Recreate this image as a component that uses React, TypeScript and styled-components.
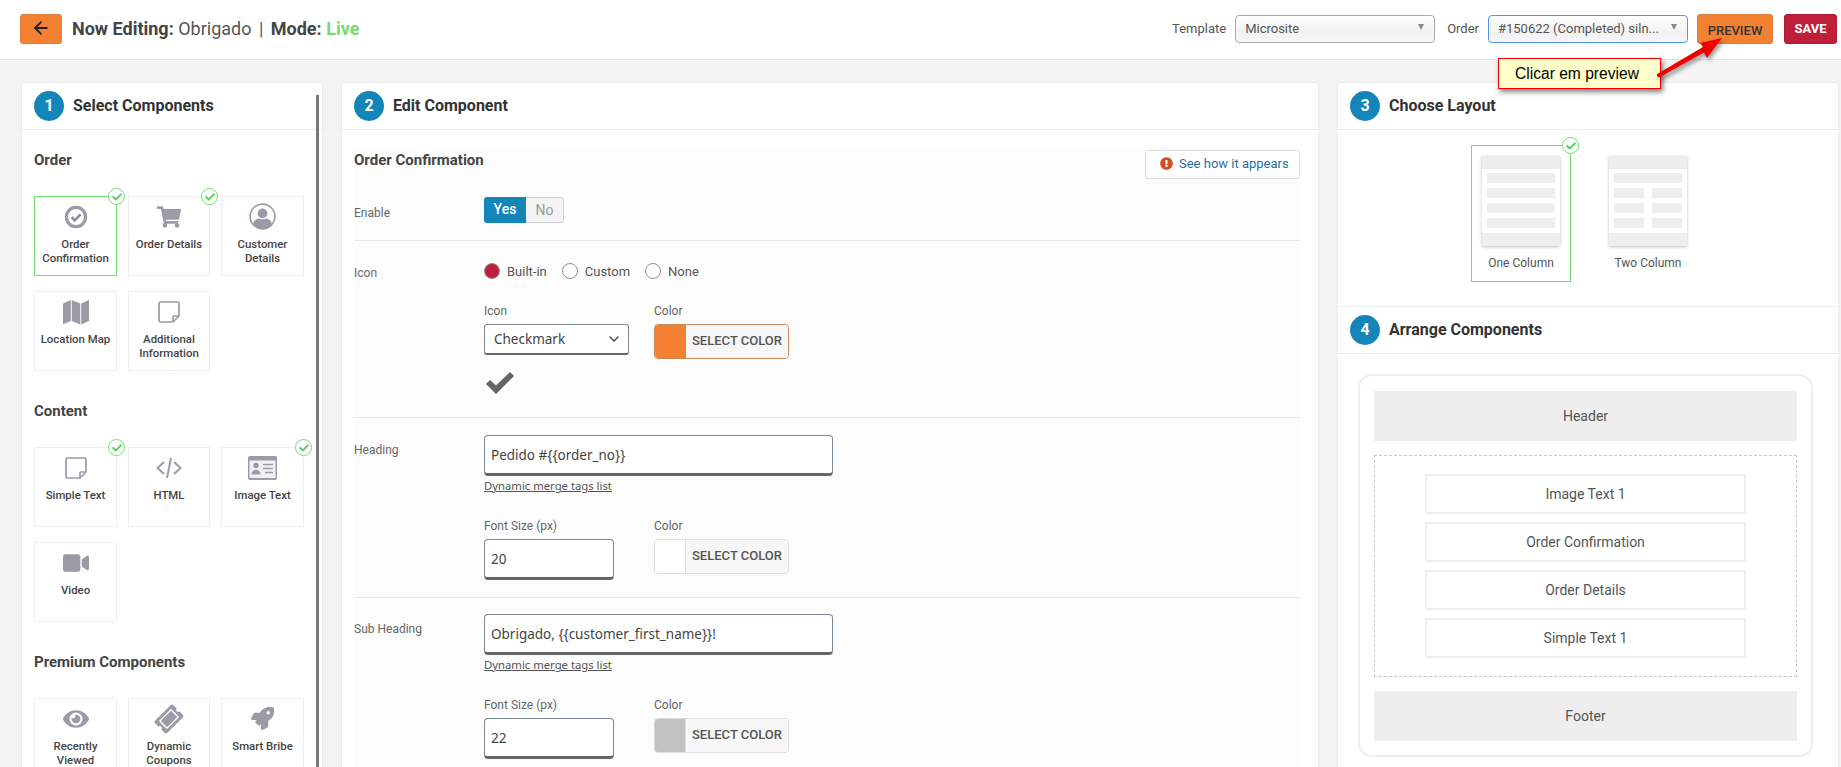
import { ReactNode } from 'react';
import { ArrowLeft, ChevronDown } from 'lucide-react';
import {
    FaCheck,
    FaExclamationCircle,
    FaEye,
    FaRocket,
    FaShoppingCart,
    FaTicketAlt,
    FaVideo,
} from 'react-icons/fa';
import styled, { createGlobalStyle } from 'styled-components';

const ICON_GRAY = '#9b9ba8';
const ORANGE = '#f48031';

const GlobalStyle = createGlobalStyle`
    html, body {
        margin: 0;
        padding: 0;
        height: 767px;
        overflow: hidden;
        background: #f4f4f4;
        font-family: Roboto, "Liberation Sans", sans-serif;
        color: #444;
    }
    * {
        box-sizing: border-box;
    }
`;

const IconTint = styled.span`
    display: flex;
    color: ${ICON_GRAY};
`;

const Coupon = styled(FaTicketAlt)`
    transform: rotate(-45deg);
    color: ${ICON_GRAY};
`;

const ConfirmIcon = () => (
    <svg width="24" height="24" viewBox="0 0 24 24">
        <circle cx="12" cy="12" r="9.6" fill="none" stroke={ICON_GRAY} strokeWidth="3.2" />
        <path d="M7.6 12.2l3.1 3.1 5.8-6" fill="none" stroke="#8d8d9a" strokeWidth="2.6" />
    </svg>
);

const CustomerIcon = () => (
    <svg width="27" height="27" viewBox="0 0 27 27">
        <circle cx="13.5" cy="13.5" r="12.4" fill="#fff" stroke={ICON_GRAY} strokeWidth="1.6" />
        <circle cx="13.5" cy="10.4" r="4.9" fill={ICON_GRAY} />
        <path
            d="M4 21c.6-3.6 3.6-5.4 6.4-5.6 1.9 1.2 4.3 1.2 6.2 0 2.8.2 5.8 2 6.4 5.6-2.2 3-5.6 4.8-9.5 4.8S6.2 24 4 21z"
            fill={ICON_GRAY}
        />
    </svg>
);

const MapIcon = () => (
    <svg width="26" height="26" viewBox="0 0 26 26" fill={ICON_GRAY}>
        <path d="M0 4.5l7.8-3.5v21L0 25.5z" />
        <path d="M8.8 1l8.4 3.5v21L8.8 22z" />
        <path d="M18.2 4.5L26 1v21l-7.8 3.5z" />
    </svg>
);

const NoteIcon = () => (
    <svg width="22" height="22" viewBox="0 0 22 22" fill="none" stroke={ICON_GRAY} strokeWidth="1.7">
        <path d="M2.5 1h17a1.5 1.5 0 0 1 1.5 1.5V15l-6 6H2.5A1.5 1.5 0 0 1 1 19.5v-17A1.5 1.5 0 0 1 2.5 1z" />
        <path d="M15 21v-5a1 1 0 0 1 1-1h5" />
    </svg>
);

const CodeIcon = () => (
    <svg width="26" height="24" viewBox="0 0 26 24" fill="none" stroke={ICON_GRAY} strokeWidth="2">
        <path d="M8 6l-6.5 6L8 18" />
        <path d="M18 6l6.5 6L18 18" />
        <path d="M15 2l-4 20" />
    </svg>
);

const IdCardIcon = () => (
    <svg width="29" height="24" viewBox="0 0 29 24">
        <rect x="0" y="0" width="29" height="24" rx="2" fill={ICON_GRAY} />
        <rect x="1.5" y="4.5" width="26" height="17.5" fill="#f1f1f3" />
        <circle cx="8" cy="9.5" r="2.7" fill={ICON_GRAY} />
        <path d="M3.5 18.5c0-3.3 2-4.8 4.5-4.8s4.5 1.5 4.5 4.8z" fill={ICON_GRAY} />
        <path d="M15 8.5h10M15 12.5h10M17 16.5h8" stroke={ICON_GRAY} strokeWidth="1.6" />
    </svg>
);

const BlockCheck = () => (
    <svg width="28" height="22" viewBox="0 0 28 22" fill="#666">
        <path d="M0 12l4-4 6 5.5L24 0l4 4-18 18z" />
    </svg>
);

interface IComponentItem {
    label: ReactNode;
    icon: ReactNode;
    selected?: boolean;
    done?: boolean;
}

const orderItems: IComponentItem[] = [
    { label: 'Order Confirmation', icon: <ConfirmIcon />, selected: true, done: true },
    { label: 'Order Details', icon: <IconTint><FaShoppingCart size={24} /></IconTint>, done: true },
    { label: 'Customer Details', icon: <CustomerIcon /> },
    { label: 'Location Map', icon: <MapIcon /> },
    { label: 'Additional Information', icon: <NoteIcon /> },
];

const contentItems: IComponentItem[] = [
    { label: 'Simple Text', icon: <NoteIcon />, done: true },
    { label: 'HTML', icon: <CodeIcon /> },
    { label: 'Image Text', icon: <IdCardIcon />, done: true },
    { label: 'Video', icon: <IconTint><FaVideo size={26} /></IconTint> },
];

const premiumItems: IComponentItem[] = [
    { label: 'Recently Viewed', icon: <IconTint><FaEye size={26} /></IconTint> },
    { label: 'Dynamic Coupons', icon: <Coupon size={26} /> },
    { label: 'Smart Bribe', icon: <IconTint><FaRocket size={23} /></IconTint> },
];

const DoneBadge = () => (
    <StyledBadge>
        <FaCheck size={10} />
    </StyledBadge>
);

const ComponentGrid = ({ items }: { items: IComponentItem[] }) => (
    <StyledGrid>
        {items.map((item, index) => (
            <StyledCard key={index} $selected={item.selected}>
                {item.done && <DoneBadge />}
                <StyledCardIcon>{item.icon}</StyledCardIcon>
                <StyledCardLabel>{item.label}</StyledCardLabel>
            </StyledCard>
        ))}
    </StyledGrid>
);

const PanelHeading = ({ step, title }: { step: number; title: string }) => (
    <StyledPanelHeader>
        <StyledStep>{step}</StyledStep>
        <StyledPanelTitle>{title}</StyledPanelTitle>
    </StyledPanelHeader>
);

const ColorPicker = ({ color, edge }: { color: string; edge: string }) => (
    <StyledColorButton $edge={edge}>
        <StyledSwatch $color={color} $edge={edge} />
        <StyledColorText>SELECT COLOR</StyledColorText>
    </StyledColorButton>
);

const TextSettings = ({
    label,
    top,
    text,
    size,
    color,
    edge,
}: {
    label: string;
    top: number;
    text: string;
    size: string;
    color: string;
    edge: string;
}) => (
    <StyledFormRow $top={top} $bottom={17}>
        <StyledRowLabel $offset={7}>{label}</StyledRowLabel>
        <div>
            <StyledTextInput readOnly value={text} />
            <StyledMergeLink>Dynamic merge tags list</StyledMergeLink>
            <StyledFieldPair>
                <div>
                    <StyledFieldLabel>Font Size (px)</StyledFieldLabel>
                    <StyledSizeInput readOnly value={size} />
                </div>
                <div>
                    <StyledFieldLabel>Color</StyledFieldLabel>
                    <ColorPicker color={color} edge={edge} />
                </div>
            </StyledFieldPair>
        </div>
    </StyledFormRow>
);

const App = () => {
    return (
        <StyledPage>
            <GlobalStyle />
            <StyledTopBar>
                <StyledBackButton>
                    <ArrowLeft size={20} strokeWidth={2.2} />
                </StyledBackButton>
                <StyledEditing>
                    <b>Now Editing:</b> Obrigado <StyledPipe>|</StyledPipe> <b>Mode:</b>{' '}
                    <StyledLive>Live</StyledLive>
                </StyledEditing>
                <StyledTopActions>
                    <StyledTopLabel>Template</StyledTopLabel>
                    <StyledTopSelect>
                        <span>Microsite</span>
                        <StyledSelectCaret />
                    </StyledTopSelect>
                    <StyledTopLabel>Order</StyledTopLabel>
                    <StyledTopSelect $focused>
                        <span>#150622 (Completed) siln...</span>
                        <StyledSelectCaret />
                    </StyledTopSelect>
                    <StyledPreviewButton>PREVIEW</StyledPreviewButton>
                    <StyledSaveButton>SAVE</StyledSaveButton>
                </StyledTopActions>
            </StyledTopBar>

            <StyledCallout>Clicar em preview</StyledCallout>
            <StyledArrow width="80" height="55" viewBox="0 0 80 55">
                <path d="M8 43.5L53 17l-3-4 22-5-15 20-3-5.5L10 47a2 2 0 0 1-2-3.5z" fill="#f00000" />
            </StyledArrow>

            <StyledColumns>
                <StyledPanel>
                    <StyledScrollThumb />
                    <PanelHeading step={1} title="Select Components" />
                    <StyledSelectBody>
                        <StyledGroupTitle>Order</StyledGroupTitle>
                        <ComponentGrid items={orderItems} />
                        <StyledGroupTitle>Content</StyledGroupTitle>
                        <ComponentGrid items={contentItems} />
                        <StyledGroupTitle>Premium Components</StyledGroupTitle>
                        <ComponentGrid items={premiumItems} />
                    </StyledSelectBody>
                </StyledPanel>

                <StyledPanel>
                    <PanelHeading step={2} title="Edit Component" />
                    <StyledForm>
                        <StyledFormTitleRow>
                            <StyledGroupTitle>Order Confirmation</StyledGroupTitle>
                            <StyledAppearsButton>
                                <FaExclamationCircle size={13} color="#d0501f" />
                                See how it appears
                            </StyledAppearsButton>
                        </StyledFormTitleRow>

                        <StyledFormRow $top={0} $bottom={17}>
                            <StyledRowLabel $offset={8}>Enable</StyledRowLabel>
                            <StyledToggle>
                                <StyledToggleYes>Yes</StyledToggleYes>
                                <StyledToggleNo>No</StyledToggleNo>
                            </StyledToggle>
                        </StyledFormRow>

                        <StyledFormRow $top={22} $bottom={23}>
                            <StyledRowLabel $offset={2}>Icon</StyledRowLabel>
                            <div>
                                <StyledRadioRow>
                                    <StyledRadioItem>
                                        <StyledRadio $checked />
                                        Built-in
                                    </StyledRadioItem>
                                    <StyledRadioItem>
                                        <StyledRadio />
                                        Custom
                                    </StyledRadioItem>
                                    <StyledRadioItem>
                                        <StyledRadio />
                                        None
                                    </StyledRadioItem>
                                </StyledRadioRow>
                                <StyledFieldPair>
                                    <div>
                                        <StyledFieldLabel>Icon</StyledFieldLabel>
                                        <StyledIconSelect>
                                            Checkmark
                                            <ChevronDown size={16} strokeWidth={2} />
                                        </StyledIconSelect>
                                    </div>
                                    <div>
                                        <StyledFieldLabel>Color</StyledFieldLabel>
                                        <ColorPicker color={ORANGE} edge="#c98a5c" />
                                    </div>
                                </StyledFieldPair>
                                <StyledCheckPreview>
                                    <BlockCheck />
                                </StyledCheckPreview>
                            </div>
                        </StyledFormRow>

                        <TextSettings
                            label="Heading"
                            top={17}
                            text="Pedido #{{order_no}}"
                            size="20"
                            color="#ffffff"
                            edge="#dcdcde"
                        />
                        <TextSettings
                            label="Sub Heading"
                            top={16}
                            text="Obrigado, {{customer_first_name}}!"
                            size="22"
                            color="#c2c2c2"
                            edge="#dcdcde"
                        />
                    </StyledForm>
                </StyledPanel>

                <StyledPanel>
                    <PanelHeading step={3} title="Choose Layout" />
                    <StyledLayoutBody>
                        <StyledLayoutOption $selected>
                            <DoneBadge />
                            <StyledThumb>
                                <StyledThumbBar />
                                <StyledThumbRows>
                                    <StyledThumbLine />
                                    <StyledThumbLine />
                                    <StyledThumbLine />
                                    <StyledThumbLine />
                                </StyledThumbRows>
                                <StyledThumbBar />
                            </StyledThumb>
                            <StyledLayoutLabel>One Column</StyledLayoutLabel>
                        </StyledLayoutOption>
                        <StyledLayoutOption>
                            <StyledThumb>
                                <StyledThumbBar />
                                <StyledThumbRows>
                                    <StyledThumbLine />
                                    <StyledThumbSplit>
                                        <StyledThumbLine />
                                        <StyledThumbLine />
                                    </StyledThumbSplit>
                                    <StyledThumbSplit>
                                        <StyledThumbLine />
                                        <StyledThumbLine />
                                    </StyledThumbSplit>
                                    <StyledThumbSplit>
                                        <StyledThumbLine />
                                        <StyledThumbLine />
                                    </StyledThumbSplit>
                                </StyledThumbRows>
                                <StyledThumbBar />
                            </StyledThumb>
                            <StyledLayoutLabel>Two Column</StyledLayoutLabel>
                        </StyledLayoutOption>
                    </StyledLayoutBody>

                    <PanelHeading step={4} title="Arrange Components" />
                    <StyledArrangeBody>
                        <StyledArrangeFrame>
                            <StyledFixedBlock>Header</StyledFixedBlock>
                            <StyledDropZone>
                                <StyledDragItem>Image Text 1</StyledDragItem>
                                <StyledDragItem>Order Confirmation</StyledDragItem>
                                <StyledDragItem>Order Details</StyledDragItem>
                                <StyledDragItem>Simple Text 1</StyledDragItem>
                            </StyledDropZone>
                            <StyledFixedBlock>Footer</StyledFixedBlock>
                        </StyledArrangeFrame>
                    </StyledArrangeBody>
                </StyledPanel>
            </StyledColumns>
        </StyledPage>
    );
};

const StyledPage = styled.div`
    position: relative;
    height: 767px;
    overflow: hidden;
`;

const StyledTopBar = styled.header`
    display: flex;
    align-items: center;
    height: 60px;
    padding: 0 4px 2px 20px;
    background: #fff;
    border-bottom: 1px solid #e3e3e3;
`;

const StyledBackButton = styled.button`
    display: flex;
    align-items: center;
    justify-content: center;
    width: 42px;
    height: 30px;
    padding: 0 0 2px;
    background: ${ORANGE};
    border: 1px solid #d9803f;
    border-radius: 3px;
    color: #222;
`;

const StyledEditing = styled.div`
    margin-left: 10px;
    font-size: 18px;
    color: #555;
    white-space: pre-wrap;

    b {
        font-weight: 700;
        color: #444;
    }
`;

const StyledPipe = styled.span`
    margin: 0 3px;
`;

const StyledLive = styled.b`
    && {
        color: #72dc72;
    }
`;

const StyledTopActions = styled.div`
    display: flex;
    align-items: center;
    margin-left: auto;
`;

const StyledTopLabel = styled.span`
    margin-right: 9px;
    font-size: 13px;
    color: #555;
`;

const StyledTopSelect = styled.div<{ $focused?: boolean }>`
    display: flex;
    align-items: center;
    justify-content: space-between;
    width: 200px;
    height: 28px;
    margin-right: 12px;
    padding: 0 10px 0 9px;
    background: linear-gradient(#fff, #f2f2f2 60%, #f6f6f6);
    border: 1px solid ${({ $focused }) => ($focused ? '#4f94ee' : '#a9a9a9')};
    border-radius: 4px;
    font-size: 13px;
    color: #555;
`;

const StyledSelectCaret = styled.i`
    width: 0;
    height: 0;
    margin-bottom: 3px;
    border-left: 3.5px solid transparent;
    border-right: 3.5px solid transparent;
    border-top: 6px solid #888;
`;

const StyledPreviewButton = styled.button`
    width: 76px;
    height: 30px;
    margin: 0 11px 0 -3px;
    padding: 3px 0 0;
    background: ${ORANGE};
    border: 1px solid #d9803f;
    border-radius: 3px;
    font: 500 13px Roboto, sans-serif;
    color: #333;
`;

const StyledSaveButton = styled.button`
    width: 53px;
    height: 30px;
    padding: 0;
    background: #be1e37;
    border: 1px solid #b01c33;
    border-radius: 3px;
    font: 700 13px Roboto, sans-serif;
    color: #fff;
`;

const StyledCallout = styled.div`
    position: absolute;
    z-index: 3;
    left: 1498px;
    top: 58px;
    width: 163px;
    height: 31px;
    padding-left: 16px;
    background: #ffffcc;
    border: 1px solid #ee0000;
    box-shadow: 2px 3px 5px rgba(0, 0, 0, 0.5);
    font: 15.6px/29px "Liberation Sans", Arial, sans-serif;
    color: #000;
`;

const StyledArrow = styled.svg`
    position: absolute;
    z-index: 3;
    left: 1650px;
    top: 30px;
    filter: drop-shadow(2px 3px 2px rgba(0, 0, 0, 0.4));
`;

const StyledColumns = styled.main`
    display: grid;
    grid-template-columns: 300px 976px 500px;
    column-gap: 20px;
    height: 707px;
    padding: 23px 0 0 22px;
`;

const StyledPanel = styled.section`
    position: relative;
    min-height: 800px;
    background: #fff;
    border-radius: 3px;
    box-shadow: 0 0 2px rgba(0, 0, 0, 0.14);
`;

const StyledScrollThumb = styled.div`
    position: absolute;
    top: 12px;
    bottom: 0;
    right: 3px;
    width: 3px;
    background: #777;
`;

const StyledPanelHeader = styled.div`
    display: flex;
    align-items: center;
    gap: 9px;
    height: 47px;
    padding: 0 12px 1px;
    border-bottom: 1px solid #ececec;
`;

const StyledStep = styled.span`
    display: flex;
    align-items: center;
    justify-content: center;
    width: 30px;
    height: 30px;
    border-radius: 50%;
    background: #1385b8;
    font-size: 16px;
    font-weight: 700;
    color: #fff;
`;

const StyledPanelTitle = styled.h2`
    margin: 0;
    font-size: 16px;
    font-weight: 700;
    color: #333;
`;

const StyledSelectBody = styled.div`
    padding: 20px 12px 0;
`;

const StyledGroupTitle = styled.h3`
    margin: 0 0 26px;
    font-size: 15px;
    font-weight: 700;
    line-height: 20px;
    color: #444;
`;

const StyledGrid = styled.div`
    display: grid;
    grid-template-columns: 83px 82px 83px;
    grid-auto-rows: 80px;
    column-gap: 11px;
    row-gap: 15px;
    margin-bottom: 30px;
`;

const StyledCard = styled.div<{ $selected?: boolean }>`
    position: relative;
    display: flex;
    flex-direction: column;
    align-items: center;
    padding-top: 6px;
    border: 1px solid ${({ $selected }) => ($selected ? '#6fdc6f' : '#eeeeee')};
    background: #fff;
`;

const StyledBadge = styled.span`
    position: absolute;
    top: -9px;
    right: -9px;
    display: flex;
    align-items: center;
    justify-content: center;
    width: 17px;
    height: 17px;
    border: 1px solid #6fdc6f;
    border-radius: 50%;
    background: #fff;
    color: #5cd05c;
`;

const StyledCardIcon = styled.div`
    display: flex;
    align-items: center;
    justify-content: center;
    height: 27px;
    margin-bottom: 7px;
`;

const StyledCardLabel = styled.div`
    padding: 0 2px;
    font-size: 11.4px;
    font-weight: 500;
    line-height: 14px;
    text-align: center;
    color: #444;
`;

const StyledForm = styled.div`
    margin: 19px 18px 0 12px;
    background: #fcfcfc;
`;

const StyledFormTitleRow = styled.div`
    display: flex;
    justify-content: space-between;
    height: 48px;
    padding-top: 1px;
`;

const StyledAppearsButton = styled.button`
    display: flex;
    align-items: center;
    gap: 6px;
    width: 155px;
    height: 29px;
    padding: 0 0 2px 14px;
    background: #fff;
    border: 1px solid #dcdcdc;
    border-radius: 3px;
    font: 13px Roboto, sans-serif;
    color: #1f6f9f;
`;

const StyledFormRow = styled.div<{ $top: number; $bottom: number }>`
    display: grid;
    grid-template-columns: 130px 1fr;
    padding: ${({ $top, $bottom }) => `${$top}px 0 ${$bottom}px`};
    border-bottom: 1px solid #e8e8e8;
`;

const StyledRowLabel = styled.div<{ $offset: number }>`
    margin-top: ${({ $offset }) => $offset}px;
    font-size: 12px;
    line-height: 16px;
    color: #666;
`;

const StyledToggle = styled.div`
    display: flex;
    width: 80px;
    height: 26px;
    border-radius: 3px;
    overflow: hidden;
    font-size: 14px;
    line-height: 24px;
    text-align: center;
`;

const StyledToggleYes = styled.span`
    width: 42px;
    background: #1385b8;
    font-weight: 500;
    color: #fff;
`;

const StyledToggleNo = styled.span`
    width: 38px;
    background: #f4f4f4;
    border: 1px solid #cfcfcf;
    border-left: 0;
    border-radius: 0 3px 3px 0;
    color: #999;
`;

const StyledRadioRow = styled.div`
    display: flex;
    gap: 15px;
    height: 16px;
    margin-bottom: 24px;
`;

const StyledRadioItem = styled.label`
    display: flex;
    align-items: center;
    gap: 7px;
    font-size: 13px;
    color: #555;
`;

const StyledRadio = styled.span<{ $checked?: boolean }>`
    width: 16px;
    height: 16px;
    border-radius: 50%;
    border: 1px solid #8c8f94;
    background: ${({ $checked }) => ($checked ? '#be1e37' : '#fff')};
`;

const StyledFieldPair = styled.div`
    display: grid;
    grid-template-columns: 170px 140px;
`;

const StyledFieldLabel = styled.div`
    margin-bottom: 5px;
    font-size: 12px;
    line-height: 16px;
    color: #666;
`;

const StyledIconSelect = styled.div`
    display: flex;
    align-items: center;
    justify-content: space-between;
    width: 145px;
    height: 31px;
    padding: 0 6px 0 9px;
    background: #fff;
    border: 1px solid #7e8993;
    border-bottom: 2px solid #666;
    border-radius: 3px;
    font: 13.5px "Noto Sans", sans-serif;
    color: #444;
`;

const StyledColorButton = styled.div<{ $edge: string }>`
    display: flex;
    width: 135px;
    height: 35px;
    border: 1px solid ${({ $edge }) => $edge};
    border-radius: 4px;
    overflow: hidden;
`;

const StyledSwatch = styled.span<{ $color: string; $edge: string }>`
    width: 31px;
    background: ${({ $color }) => $color};
    border-right: 1px solid ${({ $edge }) => $edge};
`;

const StyledColorText = styled.span`
    flex: 1;
    padding-left: 6px;
    background: #f7f7f7;
    font-size: 13px;
    font-weight: 500;
    line-height: 32px;
    color: #555;
`;

const StyledCheckPreview = styled.div`
    display: flex;
    height: 22px;
    margin: 13px 0 0 2px;
    align-items: center;
`;

const StyledTextInput = styled.input`
    display: block;
    width: 349px;
    height: 41px;
    padding: 0 6px;
    background: #fff;
    border: 1px solid #7e8993;
    border-bottom: 3px solid #666;
    border-radius: 4px;
    outline: none;
    font: 13.5px "Noto Sans", sans-serif;
    color: #444;
`;

const StyledMergeLink = styled.a`
    display: block;
    margin: 3px 0 25px;
    font: 11.3px/14px "Noto Sans", sans-serif;
    text-decoration: underline;
    color: #555;
`;

const StyledSizeInput = styled(StyledTextInput)`
    width: 130px;
`;

const StyledLayoutBody = styled.div`
    display: flex;
    gap: 27px;
    padding: 15px 0 24px 133px;
    border-bottom: 1px solid #ececec;
`;

const StyledLayoutOption = styled.div<{ $selected?: boolean }>`
    position: relative;
    display: flex;
    flex-direction: column;
    align-items: center;
    width: 100px;
    height: 137px;
    padding-top: 10px;
    border: 1px solid ${({ $selected }) => ($selected ? '#6fdc6f' : 'transparent')};
`;

const StyledThumb = styled.div`
    display: flex;
    flex-direction: column;
    width: 78px;
    height: 90px;
    background: #fff;
    box-shadow: 0 1px 3px rgba(0, 0, 0, 0.25);
`;

const StyledThumbBar = styled.div`
    height: 13px;
    background: #eeeeee;
`;

const StyledThumbRows = styled.div`
    flex: 1;
    display: flex;
    flex-direction: column;
    justify-content: space-between;
    padding: 4px 5px 5px;
`;

const StyledThumbLine = styled.div`
    flex: 1;
    max-height: 10px;
    min-height: 10px;
    background: #eeeeee;
`;

const StyledThumbSplit = styled.div`
    display: flex;
    gap: 8px;
`;

const StyledLayoutLabel = styled.div`
    margin-top: 9px;
    font-size: 12px;
    line-height: 16px;
    color: #555;
`;

const StyledArrangeBody = styled.div`
    padding: 20px 25px 0 20px;
`;

const StyledArrangeFrame = styled.div`
    display: flex;
    flex-direction: column;
    gap: 14px;
    height: 383px;
    padding: 15px 14px 14px;
    border: 2px solid #eeeeee;
    border-radius: 14px;
`;

const StyledFixedBlock = styled.div`
    height: 50px;
    background: #eeeeee;
    font-size: 14px;
    line-height: 50px;
    text-align: center;
    color: #555;
`;

const StyledDropZone = styled.div`
    display: flex;
    flex-direction: column;
    align-items: center;
    gap: 8px;
    padding: 18px 0;
    border: 1px dashed #c8c8c8;
`;

const StyledDragItem = styled.div`
    width: 321px;
    height: 40px;
    border: 2px solid #eeeeee;
    font-size: 14px;
    line-height: 36px;
    text-align: center;
    color: #555;
`;

export default App;
